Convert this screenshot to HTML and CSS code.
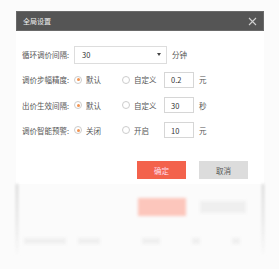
FILE: index.html
```html
<!DOCTYPE html>
<html lang="zh">
<head>
    <meta charset="UTF-8">
    <title>全局设置</title>
    <link rel="stylesheet" href="styles.css">
</head>
<body>

    <div class="dialog">
        <div class="title">
            <span>全局设置</span>
            <svg class="close" width="9" height="9" viewBox="0 0 9 9">
                <path d="M1 1L8 8M8 1L1 8" stroke="#d0d0d0" stroke-width="1.1" />
            </svg>
        </div>
        <div class="content">
            <div class="row">
                <label>循环调价间隔:</label>
                <div class="select">
                    <span>30</span>
                    <span class="arrow"></span>
                </div>
                <span class="unit">分钟</span>
            </div>
            <div class="row">
                <label>调价步幅精度:</label>
                <span class="radio on"></span><span class="opt">默认</span>
                <span class="radio"></span><span class="opt alt">自定义</span>
                <div class="box">0.2</div>
                <span class="unit">元</span>
            </div>
            <div class="row">
                <label>出价生效间隔:</label>
                <span class="radio on"></span><span class="opt">默认</span>
                <span class="radio"></span><span class="opt alt">自定义</span>
                <div class="box">30</div>
                <span class="unit">秒</span>
            </div>
            <div class="row">
                <label>调价智能预警:</label>
                <span class="radio on"></span><span class="opt">关闭</span>
                <span class="radio"></span><span class="opt alt">开启</span>
                <div class="box">10</div>
                <span class="unit">元</span>
            </div>
            <div class="buttons">
                <button class="ok">确定</button>
                <button class="cancel">取消</button>
            </div>
        </div>
    </div>

    <div class="ghost">
        <div class="ghost-buttons">
            <span class="ghost-ok"></span>
            <span class="ghost-cancel"></span>
        </div>
        <div class="ghost-row">
            <span class="g1"></span>
            <span class="g2"></span>
            <span class="g3"></span>
            <span class="g4"></span>
            <span class="g4"></span>
        </div>
    </div>

</body>
</html>
```

FILE: styles.css
```css
* {
    box-sizing: border-box;
}

body {
    margin: 0;
    background: #fbfbfb;
    font-family: "Noto Sans CJK SC", "Noto Sans", sans-serif;
    font-size: 7.5px;
    color: #444;
}

.dialog {
    margin: 11px 0 0 16px;
    width: 248px;
    background: #fff;
}

.title {
    height: 20px;
    background: #555;
    color: #eee;
    display: flex;
    align-items: center;
    justify-content: space-between;
    padding: 0 6px 0 6px;
    font-size: 7px;
    border: 1px solid #6a6a6a;
}

.content {
    padding: 15px 0 0 6px;
}

.row {
    display: flex;
    align-items: center;
    height: 17px;
    margin-bottom: 8.3px;
}

.row label {
    width: 52px;
    color: #555;
}

.select {
    width: 93px;
    height: 18px;
    border: 1px solid #ddd;
    display: flex;
    align-items: center;
    justify-content: space-between;
    padding: 0 5px 0 7px;
    color: #333;
}

.arrow {
    width: 0;
    height: 0;
    border-left: 2px solid transparent;
    border-right: 2px solid transparent;
    border-top: 3px solid #444;
}

.unit {
    margin-left: 5px;
    color: #555;
}

.radio {
    width: 8px;
    height: 8px;
    border-radius: 50%;
    border: 1px solid #ccc;
    margin-right: 4px;
    background: #fff;
    position: relative;
}

.radio.on::after {
    content: "";
    position: absolute;
    left: 1.5px;
    top: 1.5px;
    width: 3px;
    height: 3px;
    border-radius: 50%;
    background: #f29350;
}

.opt {
    width: 36px;
    color: #555;
}

.opt.alt {
    width: 30px;
}

.box {
    width: 30px;
    height: 16px;
    border: 1px solid #d6d6d6;
    display: flex;
    align-items: center;
    padding-left: 6px;
    color: #333;
}

.buttons {
    display: flex;
    justify-content: flex-end;
    gap: 13px;
    padding: 14px 16px 5px 0;
}

.buttons button {
    width: 49px;
    height: 18px;
    border: none;
    font-family: inherit;
    font-size: 7.5px;
    padding: 0;
}

.ok {
    background: #f3624c;
    color: #fde;
}

.cancel {
    background: #dcdcdc;
    color: #555;
}

.ghost {
    margin-left: 16px;
    width: 248px;
    height: 72px;
    border-left: 2px solid;
    border-right: 2px solid;
    border-image: linear-gradient(#d0d0d0, #e4e4e4 60%, rgba(240, 240, 240, 0)) 1;
    filter: blur(1.5px);
    padding-top: 14px;
}

.ghost-buttons {
    display: flex;
    justify-content: flex-end;
    gap: 14px;
    padding-right: 16px;
}

.ghost-ok {
    width: 48px;
    height: 18px;
    background: #fcc6bc;
}

.ghost-cancel {
    width: 46px;
    height: 12px;
    margin-top: 3px;
    background: #efefef;
}

.ghost-row {
    display: flex;
    align-items: center;
    gap: 12px;
    padding: 22px 0 0 6px;
}

.ghost-row span {
    height: 6px;
    background: #efefef;
}

.g1 { width: 42px; }
.g2 { width: 22px; }
.g3 { width: 18px; margin-left: 30px; }
.g4 { width: 8px; margin-left: 20px; }
```
